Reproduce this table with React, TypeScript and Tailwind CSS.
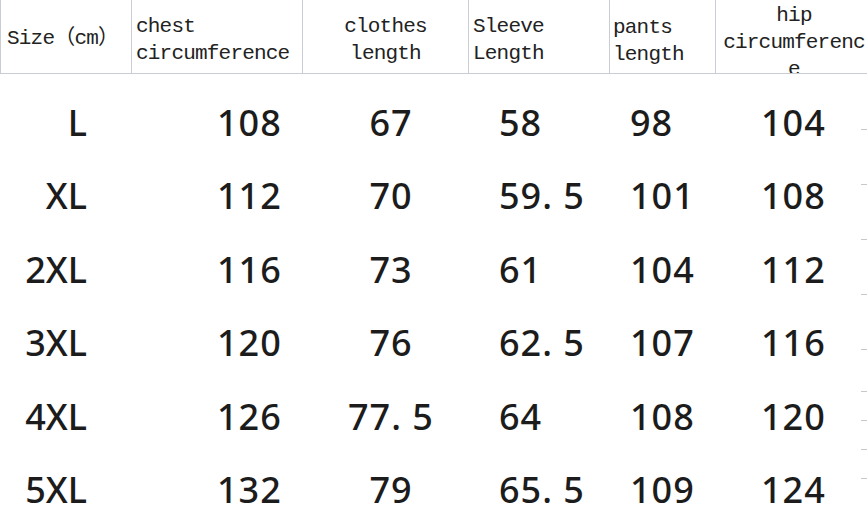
import React from "react";

const cols = "grid grid-cols-[131px_171px_166px_141px_106px_152px]";

const rows = [
  ["L", "108", "67", "58", "98", "104"],
  ["XL", "112", "70", "59. 5", "101", "108"],
  ["2XL", "116", "73", "61", "104", "112"],
  ["3XL", "120", "76", "62. 5", "107", "116"],
  ["4XL", "126", "77. 5", "64", "108", "120"],
  ["5XL", "132", "79", "65. 5", "109", "124"],
];

// little grey ticks on the right edge of the picture
const ticks = [129, 184, 239, 294, 349, 391, 420, 449, 478];

export default function App() {
  return (
    <div className="relative w-[867px] h-[530px] overflow-hidden bg-white text-[#1c1c1c]">
      {/* header */}
      <div
        className={`${cols} h-[74px] border-b border-l border-[#c9ccd4] font-['Liberation_Mono','Noto_Sans_CJK_SC',monospace] text-[21px] leading-[27px] tracking-[-0.8px] text-[#222]`}
      >
        <div className="flex items-center pl-[6px] pt-[4px] border-r border-[#c9ccd4] overflow-hidden">
          Size（cm）
        </div>
        <div className="flex items-center pl-[4px] pt-[6px] border-r border-[#c9ccd4] overflow-hidden">
          <span>
            chest
            <br />
            circumference
          </span>
        </div>
        <div className="flex items-center justify-center pt-[6px] border-r border-[#c9ccd4] overflow-hidden">
          <span className="text-center">
            clothes
            <br />
            length
          </span>
        </div>
        <div className="flex items-center pl-[4px] pt-[6px] border-r border-[#c9ccd4] overflow-hidden">
          <span>
            Sleeve
            <br />
            Length
          </span>
        </div>
        <div className="flex items-center pl-[3px] pt-[8px] border-r border-[#c9ccd4] overflow-hidden">
          <span>
            pants
            <br />
            length
          </span>
        </div>
        <div className="flex items-center justify-center pl-[4px] pt-[12px] overflow-hidden">
          <span className="text-center shrink-0">
            hip
            <br />
            circumferenc
            <br />e
          </span>
        </div>
      </div>

      {/* body */}
      <div className="pt-[12px] font-['Noto_Sans',sans-serif] text-[36px] font-medium leading-none tracking-[1px]">
        {rows.map((r, i) => (
          <div key={i} className={`${cols} h-[73.5px] items-center`}>
            <div className="text-right pr-[44px] tracking-normal">{r[0]}</div>
            <div className="pl-[86px]">{r[1]}</div>
            <div className="text-center pl-[12px]">{r[2]}</div>
            <div className="pl-[31px] whitespace-pre">{r[3]}</div>
            <div className="pl-[21px]">{r[4]}</div>
            <div className="pl-[46px]">{r[5]}</div>
          </div>
        ))}
      </div>

      {ticks.map((t) => (
        <div
          key={t}
          className="absolute right-0 w-[6px] h-px bg-[#c8c8c8]"
          style={{ top: t }}
        />
      ))}
    </div>
  );
}
